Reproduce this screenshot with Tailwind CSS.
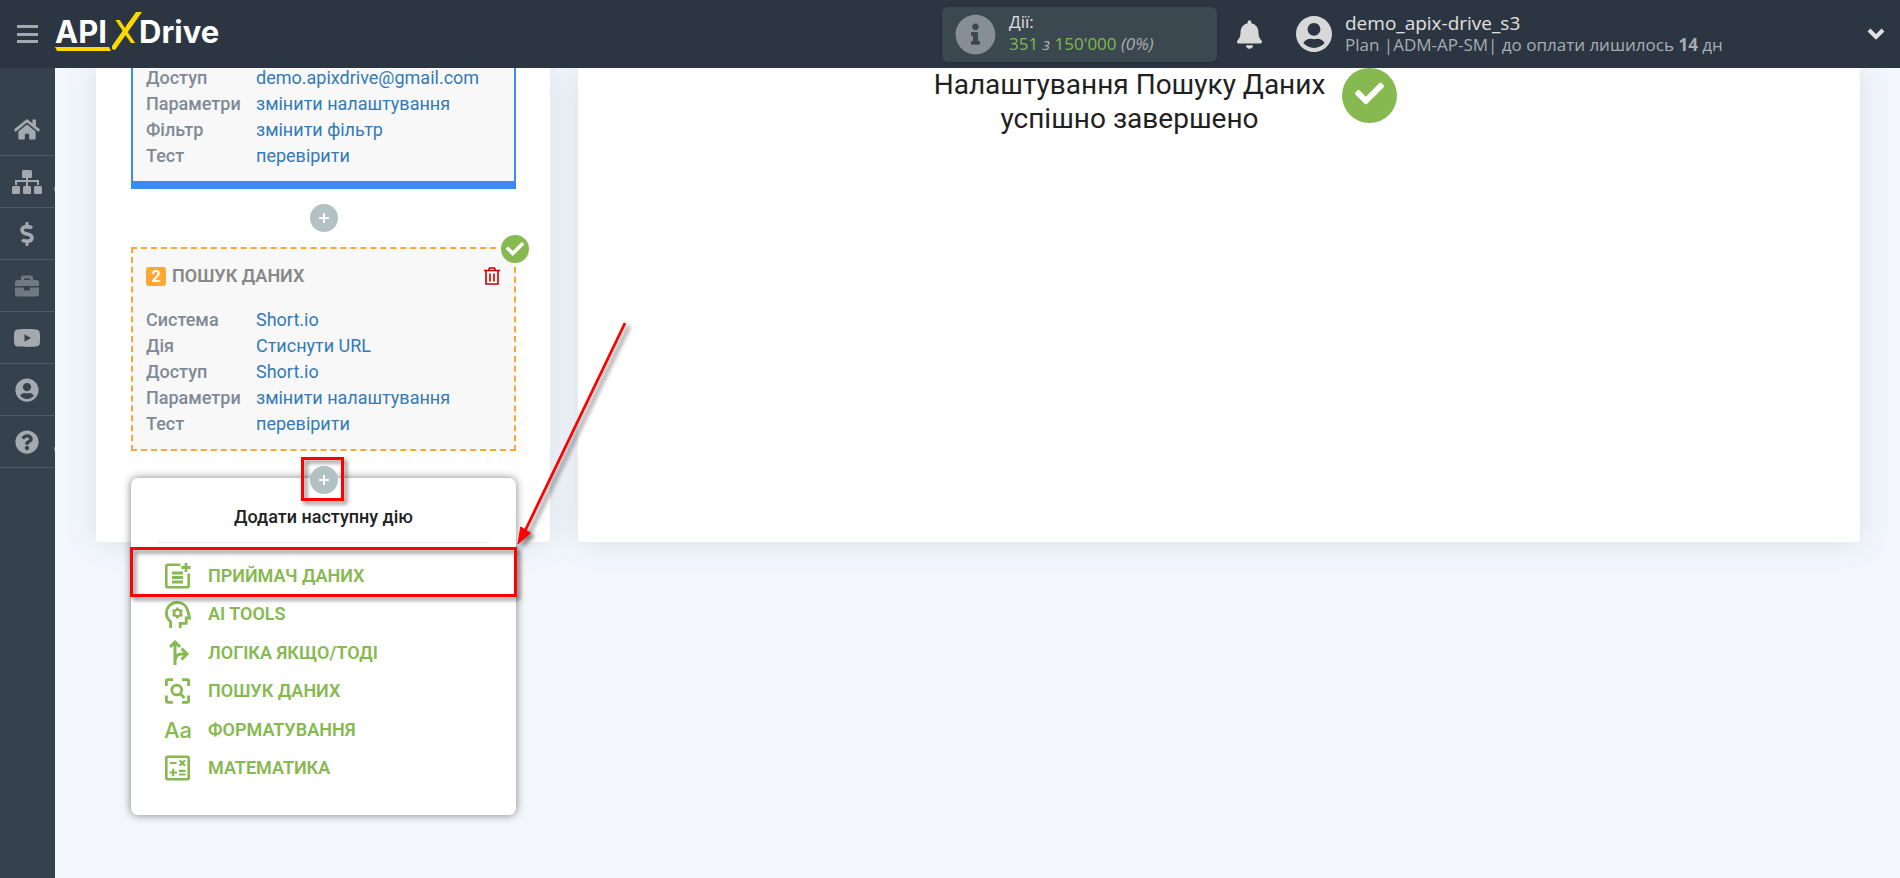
<!DOCTYPE html>
<html lang="uk">
<head>
  <meta charset="UTF-8">
  <meta name="viewport" content="width=device-width, initial-scale=1">
  <title>ApiX-Drive</title>
  <script src="https://cdn.jsdelivr.net/npm/@tailwindcss/browser@4"></script>
</head>
<body class="bg-[#f3f7fc] min-h-screen flex flex-col font-['Roboto',sans-serif] text-[#212121]">

  <!-- Top bar -->
  <header class="relative z-10 flex items-center h-[68px] shrink-0 bg-[#2b3642] text-[#e0e0e0] font-['Open_Sans',sans-serif]">
    <button type="button" aria-label="Меню" class="ml-[17px] w-[21px] h-[18px] flex flex-col justify-between">
      <span class="h-[3px] w-full bg-[#a3a9ad]"></span>
      <span class="h-[3px] w-full bg-[#a3a9ad]"></span>
      <span class="h-[3px] w-full bg-[#a3a9ad]"></span>
    </button>
    <a href="#" aria-label="APIXDrive" class="ml-[17px]">
      <svg width="170" height="44" viewBox="0 0 170 44" font-family="Inter, sans-serif" font-size="31" font-weight="700">
        <text x="0" y="31" fill="#fff">API</text>
        <text x="59" y="31" fill="#ffd800" font-weight="500">X</text>
        <path d="M81 0h6L60 38l-3-1v-3z" fill="#ffd800"/>
        <path d="M0 35h54l2 4H2z" fill="#ffd800"/>
        <text x="84" y="31" fill="#fff">Drive</text>
      </svg>
    </a>

    <div class="ml-auto flex items-center">
      <div class="flex items-center w-[275px] h-[55px] rounded-md bg-[#3c4850] pl-[13px] gap-[13px] shadow-sm">
        <svg class="size-[41px] fill-[#878e95]" viewBox="0 0 512 512"><path d="M256 8C119.043 8 8 119.083 8 256c0 136.997 111.043 248 248 248s248-111.003 248-248C504 119.083 392.957 8 256 8zm0 110c23.196 0 42 18.804 42 42s-18.804 42-42 42-42-18.804-42-42 18.804-42 42-42zm56 254c0 6.627-5.373 12-12 12h-88c-6.627 0-12-5.373-12-12v-24c0-6.627 5.373-12 12-12h12v-64h-12c-6.627 0-12-5.373-12-12v-24c0-6.627 5.373-12 12-12h64c6.627 0 12 5.373 12 12v100h12c6.627 0 12 5.373 12 12v24z"/></svg>
        <div class="pb-[2px] text-[17px] leading-[22px]">
          <div>Дії:</div>
          <div class="text-[#7fb84e]">351 <i class="text-[#a9adb1]">з</i> 150'000 <i class="text-[#a9adb1]">(0%)</i></div>
        </div>
      </div>
      <button type="button" aria-label="Сповіщення" class="ml-[20px]">
        <svg class="w-[25px] h-[29px] fill-[#d8d8d8]" viewBox="0 0 448 512"><path d="M224 512c35.32 0 63.97-28.65 63.97-64H160.03c0 35.35 28.65 64 63.97 64zm215.39-149.71c-19.32-20.76-55.47-51.99-55.47-154.29 0-77.7-54.48-139.9-127.94-155.16V32c0-17.67-14.32-32-31.98-32s-31.98 14.33-31.98 32v20.84C118.56 68.1 64.08 130.3 64.08 208c0 102.3-36.15 133.53-55.47 154.29-6 6.45-8.66 14.16-8.61 21.71.11 16.4 12.98 32 32.1 32h383.8c19.12 0 32-15.6 32.1-32 .05-7.55-2.61-15.27-8.61-21.71z"/></svg>
      </button>
      <svg class="ml-[34px] size-[36px] fill-[#d8d8d8]" viewBox="0 8 496 496"><path d="M248 8C111 8 0 119 0 256s111 248 248 248 248-111 248-248S385 8 248 8zm0 96c48.6 0 88 39.4 88 88s-39.4 88-88 88-88-39.4-88-88 39.4-88 88-88zm0 344c-58.7 0-111.3-26.6-146.5-68.2 18.8-35.4 55.6-59.8 98.5-59.8 2.4 0 4.8.4 7.1 1.1 13 4.2 26.6 6.9 40.9 6.9 14.3 0 28-2.7 40.9-6.9 2.3-.7 4.7-1.1 7.1-1.1 42.9 0 79.7 24.4 98.5 59.8C359.3 421.4 306.7 448 248 448z"/></svg>
      <div class="ml-[13px] w-[522px]">
        <div class="text-[19px] leading-[22px]">demo_apix-drive_s3</div>
        <div class="text-[17px] leading-[22px] text-[#a9adb1]">Plan |ADM-AP-SM| до оплати лишилось <b>14</b> дн</div>
      </div>
      <button type="button" aria-label="Профіль" class="mr-[15px]">
        <svg class="w-[18px] h-[12px]" viewBox="0 0 18 12" fill="none" stroke="#e0e0e0" stroke-width="4"><path d="M2 2l7 7 7-7"/></svg>
      </button>
    </div>
  </header>

  <div class="flex flex-1">
    <!-- Side menu -->
    <nav class="w-[55px] shrink-0 bg-[#36414e] pt-[36px] text-[#a3a9ae]">
      <a href="#" aria-label="Головна" class="flex items-center justify-center h-[52px] pr-px border-b border-[#4d5863]">
        <svg class="w-[26px] h-[23px] fill-current" viewBox="0 0 576 512"><path d="M280.37 148.26L96 300.11V464a16 16 0 0 0 16 16l112.06-.29a16 16 0 0 0 15.92-16V368a16 16 0 0 1 16-16h64a16 16 0 0 1 16 16v95.64a16 16 0 0 0 16 16.05L464 480a16 16 0 0 0 16-16V300L295.67 148.26a12.19 12.19 0 0 0-15.3 0zM571.6 251.47L488 182.56V44.05a12 12 0 0 0-12-12h-56a12 12 0 0 0-12 12v72.61L318.47 43a48 48 0 0 0-61 0L4.34 251.47a12 12 0 0 0-1.6 16.9l25.5 31A12 12 0 0 0 45.15 301l235.22-193.74a12.19 12.19 0 0 1 15.3 0L530.9 301a12 12 0 0 0 16.9-1.6l25.5-31a12 12 0 0 0-1.7-16.93z"/></svg>
      </a>
      <a href="#" aria-label="Зв'язки" class="relative flex items-center justify-center h-[52px] pr-px border-b border-[#4d5863]">
        <svg class="w-[30px] h-[24px] fill-current" viewBox="0 0 30 24"><rect x="10" y="0" width="10" height="8" rx="1.5"/><path d="M14 7h2v3h11v5h-2v-3h-9v4h-2v-4H5v3H3v-5h11z"/><rect x="0" y="16" width="8" height="8" rx="1.5"/><rect x="11" y="16" width="8" height="8" rx="1.5"/><rect x="22" y="16" width="8" height="8" rx="1.5"/></svg>
        <span class="absolute right-0 bottom-[16px] w-px h-[4px] bg-[#7c858e]"></span>
      </a>
      <a href="#" aria-label="Оплата" class="flex items-center justify-center h-[52px] pr-px border-b border-[#4d5863]">
        <svg class="w-[14px] h-[24px] fill-current" viewBox="0 0 288 512"><path d="M209.2 233.4l-108-31.6C88.7 198.2 80 186.5 80 173.5c0-16.3 13.2-29.5 29.5-29.5h66.3c12.2 0 24.2 3.7 34.2 10.5 6.1 4.1 14.3 3.1 19.5-2l34.8-34c7.1-6.9 6.1-18.4-1.8-24.5C238 74.8 207.4 64.1 176 64V16c0-8.8-7.2-16-16-16h-32c-8.8 0-16 7.2-16 16v48h-2.5C45.8 64-5.4 118.7.5 183.6c4.2 46.1 39.4 83.6 83.8 96.6l102.5 30c12.5 3.7 21.2 15.3 21.2 28.3 0 16.3-13.2 29.5-29.5 29.5h-66.3C100 368 88 364.3 78 357.5c-6.1-4.1-14.3-3.1-19.5 2l-34.8 34c-7.1 6.9-6.1 18.4 1.8 24.5 24.5 19.2 55.1 29.9 86.5 30v48c0 8.8 7.2 16 16 16h32c8.8 0 16-7.2 16-16v-48.2c46.6-.9 90.3-28.6 105.7-72.7 21.5-61.6-14.6-124.8-72.5-141.7z"/></svg>
      </a>
      <a href="#" aria-label="Проєкти" class="flex items-center justify-center h-[52px] pr-px border-b border-[#4d5863] text-[#707982]">
        <svg class="size-[24px] fill-current" viewBox="0 0 512 512"><path d="M320 336c0 8.84-7.16 16-16 16h-96c-8.84 0-16-7.16-16-16v-48H0v144c0 25.6 22.4 48 48 48h416c25.6 0 48-22.4 48-48V288H320v48zm144-208h-80V80c0-25.6-22.4-48-48-48H176c-25.6 0-48 22.4-48 48v48H48c-25.6 0-48 22.4-48 48v80h512v-80c0-25.6-22.4-48-48-48zm-144 0H192V96h128v32z"/></svg>
      </a>
      <a href="#" aria-label="Відео" class="flex items-center justify-center h-[52px] pr-px border-b border-[#4d5863]">
        <svg class="w-[26px] h-[18px] fill-current" viewBox="0 0 26 18"><path fill-rule="evenodd" d="M4 .4C9 0 17 0 22 .4c2.5.2 3.6 1.5 3.8 3.6.3 3 .3 7 0 10-.2 2.1-1.3 3.4-3.8 3.6-5 .4-13 .4-18 0C1.5 17.400.4 16.100.2 14c-.3-3-.3-7 0-10C.4 1.900 1.500.6 4 .4zM10.500 5.200v7.600L17 9z"/></svg>
      </a>
      <a href="#" aria-label="Профіль користувача" class="flex items-center justify-center h-[52px] pr-px border-b border-[#4d5863]">
        <svg class="size-[24px] fill-current" viewBox="0 0 496 512"><path d="M248 8C111 8 0 119 0 256s111 248 248 248 248-111 248-248S385 8 248 8zm0 96c48.6 0 88 39.4 88 88s-39.4 88-88 88-88-39.4-88-88 39.4-88 88-88zm0 344c-58.7 0-111.3-26.6-146.5-68.2 18.8-35.4 55.6-59.8 98.5-59.8 2.4 0 4.8.4 7.1 1.1 13 4.2 26.6 6.9 40.9 6.9 14.3 0 28-2.7 40.9-6.9 2.3-.7 4.7-1.1 7.1-1.1 42.9 0 79.7 24.4 98.5 59.8C359.3 421.4 306.7 448 248 448z"/></svg>
      </a>
      <a href="#" aria-label="Допомога" class="relative flex items-center justify-center h-[52px] pr-px border-b border-[#4d5863]">
        <svg class="size-[24px] fill-current" viewBox="0 0 512 512"><path d="M504 256c0 136.997-111.043 248-248 248S8 392.997 8 256C8 119.083 119.043 8 256 8s248 111.083 248 248zM262.655 90c-54.497 0-89.255 22.957-116.549 63.758-3.536 5.286-2.353 12.415 2.715 16.258l34.699 26.31c5.205 3.947 12.621 3.008 16.665-2.122 17.864-22.658 30.113-35.797 57.303-35.797 20.429 0 45.698 13.148 45.698 32.958 0 14.976-12.363 22.667-32.534 33.976C247.128 238.528 216 254.941 216 296v4c0 6.627 5.373 12 12 12h56c6.627 0 12-5.373 12-12v-1.333c0-28.462 83.186-29.647 83.186-106.667 0-58.002-60.165-102-116.531-102zM256 338c-25.365 0-46 20.635-46 46 0 25.364 20.635 46 46 46s46-20.636 46-46c0-25.365-20.635-46-46-46z"/></svg>
        <span class="absolute right-0 bottom-[16px] w-px h-[4px] bg-[#7c858e]"></span>
      </a>
    </nav>

    <main class="flex flex-1 items-stretch gap-[28px] pl-[41px] pr-[40px] pb-[336px]">

      <!-- Steps of the connection -->
      <section class="relative w-[454px] shrink-0 pl-[35px] pr-[34px] pb-[48px] bg-white rounded-b shadow-[0_0_30px_rgba(100,115,140,0.18)]">
        <div class="-mt-[3px] border-2 border-t-0 border-b-8 border-[#3d8af7] bg-[#f8f8f8] pl-[13px] pb-[12px]">
          <dl class="grid grid-cols-[110px_1fr] text-lg leading-[26px]">
            <dt class="font-medium text-[#808a95]">Доступ</dt>
            <dd><a href="#" class="text-[#337ab7]">demo.apixdrive@gmail.com</a></dd>
            <dt class="font-medium text-[#808a95]">Параметри</dt>
            <dd><a href="#" class="text-[#337ab7]">змінити налаштування</a></dd>
            <dt class="font-medium text-[#808a95]">Фільтр</dt>
            <dd><a href="#" class="text-[#337ab7]">змінити фільтр</a></dd>
            <dt class="font-medium text-[#808a95]">Тест</dt>
            <dd><a href="#" class="text-[#337ab7]">перевірити</a></dd>
          </dl>
        </div>

        <div class="flex justify-center py-[15px]">
          <button type="button" aria-label="Додати дію" class="size-[28px] rounded-full bg-[#b2c2c2] flex items-center justify-center">
            <svg class="size-[10px]" viewBox="0 0 10 10" stroke="#fff" stroke-width="2"><path d="M5 0v10M0 5h10"/></svg>
          </button>
        </div>

        <div class="relative border-2 border-dashed border-[#ffa733] bg-[#f8f8f8] pl-[13px] pr-[14px] pt-[15px] pb-[12px]">
          <div class="flex items-center h-[24px] mb-[19px]">
            <span class="w-[20px] h-[19px] rounded-[3px] bg-[#ffa733] text-white text-base leading-[19px] font-bold text-center">2</span>
            <h3 class="ml-[6px] text-lg leading-[24px] font-semibold text-[#888]">ПОШУК ДАНИХ</h3>
            <button type="button" aria-label="Видалити" class="ml-auto">
              <svg class="w-[16px] h-[18px]" viewBox="0 0 16 18" fill="none" stroke="#cc0000" stroke-width="1.6"><path d="M0 3.5h16M4.500 3.500L5.500 1h5l1 2.500M2 3.500V17h12V3.500M6 6.500v8M10 6.500v8"/></svg>
            </button>
          </div>
          <dl class="grid grid-cols-[110px_1fr] text-lg leading-[26px]">
            <dt class="font-medium text-[#808a95]">Система</dt>
            <dd><a href="#" class="text-[#337ab7]">Short.io</a></dd>
            <dt class="font-medium text-[#808a95]">Дія</dt>
            <dd><a href="#" class="text-[#337ab7]">Стиснути URL</a></dd>
            <dt class="font-medium text-[#808a95]">Доступ</dt>
            <dd><a href="#" class="text-[#337ab7]">Short.io</a></dd>
            <dt class="font-medium text-[#808a95]">Параметри</dt>
            <dd><a href="#" class="text-[#337ab7]">змінити налаштування</a></dd>
            <dt class="font-medium text-[#808a95]">Тест</dt>
            <dd><a href="#" class="text-[#337ab7]">перевірити</a></dd>
          </dl>
          <span class="absolute -top-[16px] -right-[17px] size-[32px] rounded-full bg-[#86b94f] border-2 border-[#f8f8f8] flex items-center justify-center">
            <svg class="size-[18px] fill-white" viewBox="0 0 512 512"><path d="M173.898 439.404l-166.4-166.4c-9.997-9.997-9.997-26.206 0-36.204l36.203-36.204c9.997-9.998 26.207-9.998 36.204 0L192 312.69 432.095 72.596c9.997-9.997 26.207-9.997 36.204 0l36.203 36.204c9.997 9.997 9.997 26.206 0 36.204l-294.4 294.401c-9.998 9.997-26.207 9.997-36.204-.001z"/></svg>
          </span>
        </div>

        <div class="relative flex justify-center pt-[15px]">
          <!-- Menu with the next action -->
          <div class="absolute top-[27px] left-0 right-0 h-[337px] bg-white rounded-[7px] shadow-[0_0_8px_rgba(0,0,0,0.5)]">
            <h4 class="mx-[27px] pt-[26px] pb-[12px] border-b border-[#e8e8e8] text-center text-lg leading-[26px] font-medium">Додати наступну дію</h4>
            <ul class="mt-[14px] h-[230px] flex flex-col justify-between text-lg font-semibold text-[#86b94f]">
              <li class="relative">
                <button type="button" class="flex items-center w-full h-[38px] pl-[34px] gap-[17px]">
                  <svg class="size-[26px]" viewBox="0 0 26 26" fill="none" stroke="currentColor" stroke-width="2.6"><path d="M15.5 1.700H3Q1.300 1.700 1.300 3.500V22.500Q1.300 24.300 3 24.300H22Q23.700 24.300 23.700 22.500V10.500"/><path d="M7 10h11M7 14.500h11M7 19h11M21 0v9M16.500 4.500h9" stroke-width="2.8"/></svg>
                  ПРИЙМАЧ ДАНИХ
                </button>
                <span class="absolute -top-[10px] -inset-x-px h-[50px] border-3 border-[#f00] drop-shadow-[3px_3px_2px_rgba(0,0,0,0.5)]"></span>
              </li>
              <li>
                <button type="button" class="flex items-center w-full h-[38px] pl-[34px] gap-[17px]">
                  <svg class="w-[26px] h-[27px]" viewBox="0 0 26 27" fill="none" stroke="currentColor" stroke-width="2.8"><path d="M5.600 27v-6.500C3 18.500 1.400 15.600 1.400 12.200 1.400 6 6.200 1.400 12.300 1.400c5.700 0 9.900 3.800 10.600 9L24.600 17h-3.400v5.400h-6V27"/><circle cx="12.500" cy="12" r="3.400" stroke-width="2.400"/><path d="M12.500 8.600V6.500M12.500 15.400v2.100M9.600 10.300L7.700 9.200M15.400 10.300l1.900-1.100M9.600 13.700l-1.900 1.100M15.400 13.700l1.900 1.100" stroke-width="2.600"/></svg>
                  AI TOOLS
                </button>
              </li>
              <li>
                <button type="button" class="flex items-center w-full h-[38px] pl-[34px] gap-[17px]">
                  <svg class="size-[26px]" viewBox="0 0 26 26" fill="none" stroke="currentColor" stroke-width="3"><path d="M10 25V2.500M5 7l5-5 5 5M10 20.500Q10.500 14 17 14h5M16.500 8.500l5.500 5.500-5.500 5.500"/></svg>
                  ЛОГІКА ЯКЩО/ТОДІ
                </button>
              </li>
              <li>
                <button type="button" class="flex items-center w-full h-[38px] pl-[34px] gap-[17px]">
                  <svg class="size-[26px]" viewBox="0 0 26 26" fill="none" stroke="currentColor" stroke-width="2.800"><path d="M1.400 8V3Q1.400 1.700 2.600 1.700H8M17 1.700h5.400Q23.600 1.700 23.600 3v5M23.600 17.500V23q0 1.300-1.200 1.300H17M8 24.300H2.600Q1.400 24.300 1.400 23v-5.500"/><circle cx="11.700" cy="12" r="4.900"/><path d="M15 15.500l4.500 4.500"/></svg>
                  ПОШУК ДАНИХ
                </button>
              </li>
              <li>
                <button type="button" class="flex items-center w-full h-[38px] pl-[34px] gap-[17px]">
                  <span class="w-[26px] text-[22px] leading-[26px] font-medium font-['Inter',sans-serif] text-nowrap -indent-px">Aa</span>
                  ФОРМАТУВАННЯ
                </button>
              </li>
              <li>
                <button type="button" class="flex items-center w-full h-[38px] pl-[34px] gap-[17px]">
                  <svg class="size-[26px]" viewBox="0 0 26 26" fill="none" stroke="currentColor" stroke-width="2.600"><rect x="1.300" y="1.700" width="22.400" height="22.600" rx="1.500"/><path d="M5 8h6.500M14.500 5.200l5.500 5.500M20 5.200l-5.500 5.500M4.500 17.500h7.500M8.200 13.700v7.600M14 15.800h6.500M14 19.500h6.500" stroke-width="2.200"/></svg>
                  МАТЕМАТИКА
                </button>
              </li>
            </ul>
          </div>
          <button type="button" aria-label="Додати наступну дію" class="relative size-[28px] rounded-full bg-[#b2c2c2] flex items-center justify-center">
            <svg class="size-[10px]" viewBox="0 0 10 10" stroke="#fff" stroke-width="2"><path d="M5 0v10M0 5h10"/></svg>
            <span class="absolute -top-[9px] -left-[9px] w-[43px] h-[44px] border-3 border-[#f00] drop-shadow-[3px_3px_2px_rgba(0,0,0,0.5)]"></span>
          </button>
          <!-- Pointer to the menu item -->
          <svg class="absolute z-10 left-[384px] -top-[130px] w-[120px] h-[230px] drop-shadow-[4px_3px_2px_rgba(0,0,0,0.5)]" viewBox="0 0 120 230"><path d="M110 2L10 210" stroke="#f00" stroke-width="2.800"/><path d="M3 223l2.700-17 9.600 6z" fill="#f00" stroke="#f00"/></svg>
        </div>
      </section>

      <!-- Result -->
      <section class="flex-1 flex justify-center items-start pr-[108px] bg-white rounded-b shadow-[0_0_30px_rgba(100,115,140,0.18)]">
        <h2 class="w-[392px] text-center text-[28px] leading-[34px] whitespace-nowrap">Налаштування Пошуку Даних<br>успішно завершено</h2>
        <span class="ml-[16px] size-[55px] pb-[5px] rounded-full bg-[#86b94f] flex items-center justify-center">
          <svg class="size-[29px] fill-white" viewBox="0 0 512 512"><path d="M173.898 439.404l-166.4-166.4c-9.997-9.997-9.997-26.206 0-36.204l36.203-36.204c9.997-9.998 26.207-9.998 36.204 0L192 312.69 432.095 72.596c9.997-9.997 26.207-9.997 36.204 0l36.203 36.204c9.997 9.997 9.997 26.206 0 36.204l-294.4 294.401c-9.998 9.997-26.207 9.997-36.204-.001z"/></svg>
        </span>
      </section>
    </main>
  </div>

</body>
</html>
